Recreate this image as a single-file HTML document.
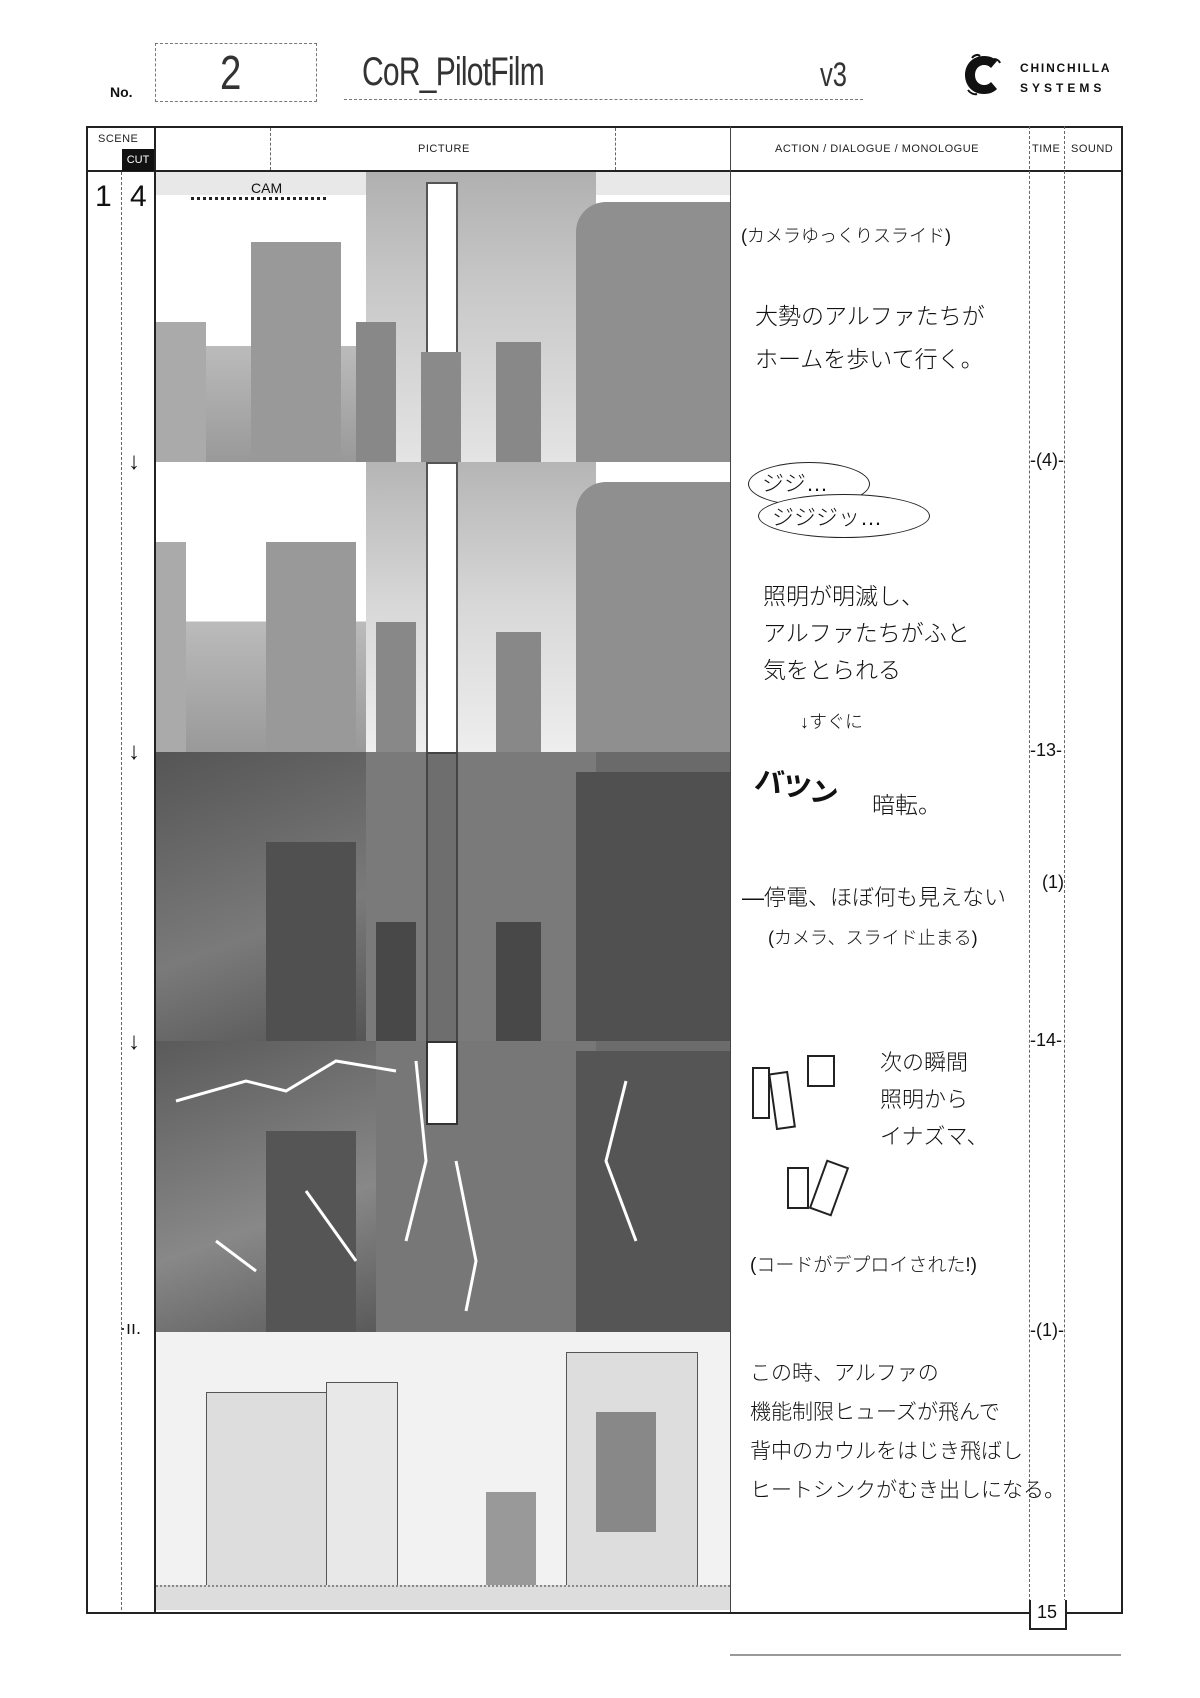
<!DOCTYPE html>
<html><head><meta charset="utf-8"><style>
body{margin:0;background:#fff;width:1200px;height:1698px;position:relative;overflow:hidden;font-family:"Liberation Sans","Noto Sans CJK JP",sans-serif;color:#111}
.a{position:absolute}
.hw{font-family:"Liberation Sans","Noto Sans CJK JP",sans-serif;font-weight:300;white-space:nowrap}
.lbl{font-size:11px;letter-spacing:0.5px;color:#222}
.dv{position:absolute;border-left:1px dashed #666;width:0}
.pn{position:absolute;left:156px;width:574px;overflow:hidden;border-bottom:2px solid #222}
</style></head><body>
<div class="a" style="left:110px;top:84px;font-size:14px;font-weight:bold">No.</div>
<div class="a" style="left:155px;top:43px;width:160px;height:57px;border:1px dashed #777"></div>
<div class="a hw" style="left:220px;top:46px;font-size:48px;transform:scaleX(0.8);transform-origin:left;color:#333">2</div>
<div class="a" style="left:344px;top:99px;width:519px;border-top:1px dashed #777"></div>
<div class="a hw" style="left:362px;top:50px;font-size:40px;letter-spacing:-1px;transform:scaleX(0.75);transform-origin:left;color:#333">CoR_PilotFilm</div>
<div class="a hw" style="left:820px;top:56px;font-size:34px;transform:scaleX(0.75);transform-origin:left;color:#333">v3</div>
<svg class="a" style="left:962px;top:52px" width="44" height="46" viewBox="0 0 44 46"><path d="M22 4C10 4 3 13 3 23s7 19 19 19c6 0 10-2 13-5l-6-7c-2 2-4 3-7 3-5 0-9-4-9-10s4-10 9-10c3 0 5 1 7 3l6-7C32 6 28 4 22 4z" fill="#111"/><path d="M10 6c2-3 6-4 8-2M30 8c3-2 7 0 8 3M6 38c2 3 6 5 9 4" stroke="#111" stroke-width="2" fill="none"/></svg>
<div class="a" style="left:1020px;top:58px;font-size:12px;font-weight:bold;letter-spacing:1.8px;line-height:20px">CHINCHILLA<br><span style="letter-spacing:4px">SYSTEMS</span></div>
<div class="a" style="left:86px;top:126px;width:1033px;height:1484px;border:2px solid #222"></div>
<div class="a" style="left:86px;top:170px;width:1035px;border-top:2px solid #222"></div>
<div class="a" style="left:154px;top:126px;height:1486px;border-left:2px solid #222"></div>
<div class="a" style="left:730px;top:126px;height:1486px;border-left:1px solid #444"></div>
<div class="dv" style="left:121px;top:172px;height:1438px"></div>
<div class="dv" style="left:1029px;top:126px;height:1486px"></div>
<div class="dv" style="left:1064px;top:126px;height:1486px"></div>
<div class="dv" style="left:270px;top:128px;height:42px"></div>
<div class="dv" style="left:615px;top:128px;height:42px"></div>
<div class="a lbl" style="left:98px;top:133px">SCENE</div>
<div class="a" style="left:122px;top:149px;width:32px;height:22px;background:#111;color:#fff;font-size:11px;text-align:center;line-height:22px">CUT</div>
<div class="a lbl" style="left:418px;top:143px">PICTURE</div>
<div class="a lbl" style="left:775px;top:143px">ACTION / DIALOGUE / MONOLOGUE</div>
<div class="a lbl" style="left:1032px;top:143px">TIME</div>
<div class="a lbl" style="left:1071px;top:143px">SOUND</div>
<div class="a hw" style="left:95px;top:180px;font-size:30px">1</div>
<div class="a hw" style="left:130px;top:180px;font-size:30px">4</div>
<div class="pn" style="top:172px;height:290px;background:linear-gradient(#e8e8e8 0 8%,#fff 8% 60%,#bbb 60%,#999)">
 <div class="a" style="left:210px;top:0;width:230px;height:290px;background:linear-gradient(#b0b0b0,#c8c8c8 40%,#e4e4e4)"></div>
 <div class="a" style="left:270px;top:10px;width:28px;height:280px;background:#fff;border:2px solid #555"></div>
 <div class="a" style="left:420px;top:30px;width:154px;height:260px;background:#8f8f8f;border-radius:30px 0 0 0"></div>
 <div class="a" style="left:95px;top:70px;width:90px;height:220px;background:#999"></div>
 <div class="a" style="left:200px;top:150px;width:40px;height:140px;background:#888"></div>
 <div class="a" style="left:265px;top:180px;width:40px;height:110px;background:#8a8a8a"></div>
 <div class="a" style="left:340px;top:170px;width:45px;height:120px;background:#888"></div>
 <div class="a" style="left:0;top:150px;width:50px;height:140px;background:#aaa"></div>
 <div class="a hw" style="left:95px;top:8px;font-size:14px">CAM</div>
 <div class="a" style="left:35px;top:25px;width:135px;border-top:3px dotted #222"></div>
</div>
<div class="pn" style="top:462px;height:290px;background:linear-gradient(#fff 0 55%,#bbb 55%,#999)">
 <div class="a" style="left:210px;top:0;width:230px;height:290px;background:linear-gradient(#b5b5b5,#d8d8d8 50%,#eee)"></div>
 <div class="a" style="left:270px;top:0;width:28px;height:290px;background:#fff;border:2px solid #555"></div>
 <div class="a" style="left:420px;top:20px;width:154px;height:270px;background:#8f8f8f;border-radius:30px 0 0 0"></div>
 <div class="a" style="left:110px;top:80px;width:90px;height:210px;background:#999"></div>
 <div class="a" style="left:0;top:80px;width:30px;height:210px;background:#aaa"></div>
 <div class="a" style="left:220px;top:160px;width:40px;height:130px;background:#888"></div>
 <div class="a" style="left:340px;top:170px;width:45px;height:120px;background:#888"></div>
</div>
<div class="pn" style="top:752px;height:289px;background:#6a6a6a">
 <div class="a" style="left:0;top:0;width:210px;height:289px;background:linear-gradient(160deg,#555,#7a7a7a 60%,#555)"></div>
 <div class="a" style="left:210px;top:0;width:230px;height:289px;background:#7a7a7a"></div>
 <div class="a" style="left:270px;top:0;width:28px;height:289px;background:#6e6e6e;border:2px solid #444"></div>
 <div class="a" style="left:420px;top:20px;width:154px;height:269px;background:#505050"></div>
 <div class="a" style="left:110px;top:90px;width:90px;height:199px;background:#505050"></div>
 <div class="a" style="left:220px;top:170px;width:40px;height:119px;background:#484848"></div>
 <div class="a" style="left:340px;top:170px;width:45px;height:119px;background:#484848"></div>
</div>
<div class="pn" style="top:1041px;height:291px;background:#6c6c6c">
 <div class="a" style="left:0;top:0;width:220px;height:291px;background:linear-gradient(160deg,#5a5a5a,#888 60%,#5a5a5a)"></div>
 <div class="a" style="left:220px;top:0;width:220px;height:291px;background:#777"></div>
 <div class="a" style="left:270px;top:0;width:28px;height:80px;background:#fff;border:2px solid #333"></div>
 <div class="a" style="left:420px;top:10px;width:154px;height:281px;background:#555"></div>
 <div class="a" style="left:110px;top:90px;width:90px;height:201px;background:#555"></div>
 <svg class="a" style="left:0;top:0" width="574" height="291"><path d="M20 60L90 40 130 50 180 20 240 30M260 20L270 120 250 200M470 40L450 120 480 200M300 120L320 220 310 270M150 150L200 220M60 200L100 230" stroke="#fff" stroke-width="3" fill="none"/></svg>
</div>
<div class="pn" style="top:1332px;height:278px;background:#f2f2f2;border-bottom:none">
 <div class="a" style="left:50px;top:60px;width:120px;height:218px;background:#ddd;border:1px solid #555"></div>
 <div class="a" style="left:170px;top:50px;width:70px;height:228px;background:#e8e8e8;border:1px solid #555"></div>
 <div class="a" style="left:410px;top:20px;width:130px;height:258px;background:#ddd;border:1px solid #555"></div>
 <div class="a" style="left:440px;top:80px;width:60px;height:120px;background:#888"></div>
 <div class="a" style="left:330px;top:160px;width:50px;height:118px;background:#999"></div>
 <div class="a" style="left:0;top:253px;width:574px;height:25px;background:#ddd;border-top:2px dotted #888"></div>
</div>
<div class="a hw" style="left:128px;top:448px;font-size:24px">↓</div>
<div class="a hw" style="left:128px;top:738px;font-size:24px">↓</div>
<div class="a hw" style="left:128px;top:1028px;font-size:24px">↓</div>
<div class="a hw" style="left:120px;top:1318px;font-size:18px">·ıı.</div>
<div class="a hw" style="left:741px;top:222px;font-size:18px">(カメラゆっくりスライド)</div>
<div class="a hw" style="left:755px;top:295px;font-size:23px;line-height:43px">大勢のアルファたちが<br>ホームを歩いて行く。</div>
<div class="a" style="left:748px;top:462px;width:120px;height:42px;border:1.5px solid #222;border-radius:50%"></div>
<div class="a" style="left:758px;top:494px;width:170px;height:42px;border:1.5px solid #222;border-radius:50%;background:#fff"></div>
<div class="a hw" style="left:762px;top:466px;font-size:22px">ジジ…</div>
<div class="a hw" style="left:772px;top:500px;font-size:22px">ジジジッ…</div>
<div class="a hw" style="left:763px;top:578px;font-size:23px;line-height:37px">照明が明滅し、<br>アルファたちがふと<br>気をとられる</div>
<div class="a hw" style="left:800px;top:708px;font-size:18px">↓すぐに</div>
<div class="a hw" style="left:755px;top:766px;font-size:28px;font-weight:bold;transform:rotate(12deg)">バツン</div>
<div class="a hw" style="left:872px;top:786px;font-size:23px">暗転。</div>
<div class="a hw" style="left:742px;top:880px;font-size:22px">—停電、ほぼ何も見えない</div>
<div class="a hw" style="left:768px;top:924px;font-size:18px">(カメラ、スライド止まる)</div>
<svg class="a" style="left:748px;top:1048px" width="120" height="170"><g stroke="#222" stroke-width="2" fill="none"><rect x="5" y="20" width="16" height="50"/><rect x="25" y="25" width="18" height="55" transform="rotate(-8 34 52)"/><rect x="60" y="8" width="26" height="30"/><rect x="40" y="120" width="20" height="40"/><rect x="70" y="115" width="22" height="50" transform="rotate(20 81 140)"/></g></svg>
<div class="a hw" style="left:880px;top:1044px;font-size:22px;line-height:37px">次の瞬間<br>照明から<br>イナズマ、</div>
<div class="a hw" style="left:750px;top:1250px;font-size:19px">(コードがデプロイされた!)</div>
<div class="a hw" style="left:750px;top:1354px;font-size:21px;line-height:39px">この時、アルファの<br>機能制限ヒューズが飛んで<br>背中のカウルをはじき飛ばし<br>ヒートシンクがむき出しになる。</div>
<div class="a hw" style="left:1030px;top:450px;font-size:18px">-(4)-</div>
<div class="a hw" style="left:1030px;top:740px;font-size:18px">-13-</div>
<div class="a hw" style="left:1042px;top:872px;font-size:18px">(1)</div>
<div class="a hw" style="left:1030px;top:1030px;font-size:18px">-14-</div>
<div class="a hw" style="left:1030px;top:1320px;font-size:18px">-(1)-</div>
<div class="a" style="left:1029px;top:1600px;width:34px;height:28px;border:2px solid #222;border-top:none;background:#fff"></div>
<div class="a hw" style="left:1037px;top:1602px;font-size:18px">15</div>
<div class="a" style="left:730px;top:1654px;width:391px;border-top:2px solid #999"></div>
</body></html>
